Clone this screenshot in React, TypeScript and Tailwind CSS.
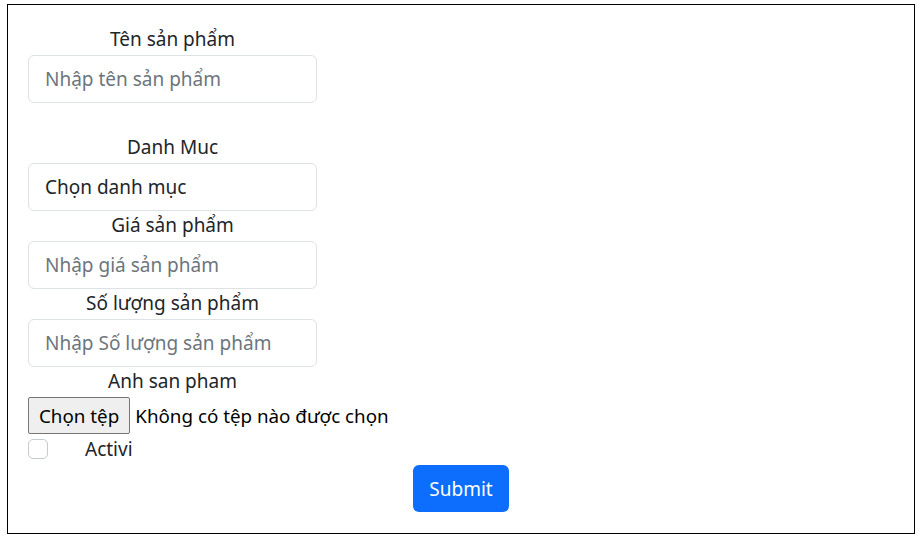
import React from "react";

const font = { fontFamily: '"Noto Sans", sans-serif' };

export default function App() {
  return (
    <div className="bg-white w-[919px] h-[540px] pt-[4px] pl-[7px]" style={font}>
      <div className="w-[908px] h-[530px] border border-black px-[20px] pt-[20px] text-[19px] leading-[28px] text-[#212529]">
        <div className="w-[289px] flex flex-col">
          <label className="text-center h-[30px]">Tên sản phẩm</label>
          <input
            className="h-[48px] rounded-[6px] border border-[#dee2e6] px-4 text-[19px] placeholder:text-[#6c757d] outline-none"
            placeholder="Nhập tên sản phẩm"
          />
          <div className="h-[30px]" />
          <label className="text-center h-[30px]">Danh Muc</label>
          <div className="h-[48px] rounded-[6px] border border-[#dee2e6] px-4 text-[19px] flex items-center">
            Chọn danh mục
          </div>
          <label className="text-center h-[30px]">Giá sản phẩm</label>
          <input
            className="h-[48px] rounded-[6px] border border-[#dee2e6] px-4 text-[19px] placeholder:text-[#6c757d] outline-none"
            placeholder="Nhập giá sản phẩm"
          />
          <label className="text-center h-[30px]">Số lượng sản phẩm</label>
          <input
            className="h-[48px] rounded-[6px] border border-[#dee2e6] px-4 text-[19px] placeholder:text-[#6c757d] outline-none"
            placeholder="Nhập Số lượng sản phẩm"
          />
          <label className="text-center h-[30px]">Anh san pham</label>
        </div>
        <div className="flex items-center h-[37px] whitespace-nowrap text-[18.8px]">
          <span className="h-[37px] px-[10px] flex items-center bg-[#efefef] border border-[#767676] rounded-[2px] text-[#000]">
            Chọn tệp
          </span>
          <span className="ml-[5px] text-black">Không có tệp nào được chọn</span>
        </div>
        <div className="flex items-center h-[30px]">
          <span className="w-[20px] h-[20px] rounded-[5px] border border-[#c5cad0] bg-white" />
          <span className="ml-[37px]">Activi</span>
        </div>
        <div className="flex justify-center mt-[1px]">
          <button className="h-[47px] w-[96px] rounded-[6px] bg-[#0d6efd] text-white text-[19px]">
            Submit
          </button>
        </div>
      </div>
    </div>
  );
}
